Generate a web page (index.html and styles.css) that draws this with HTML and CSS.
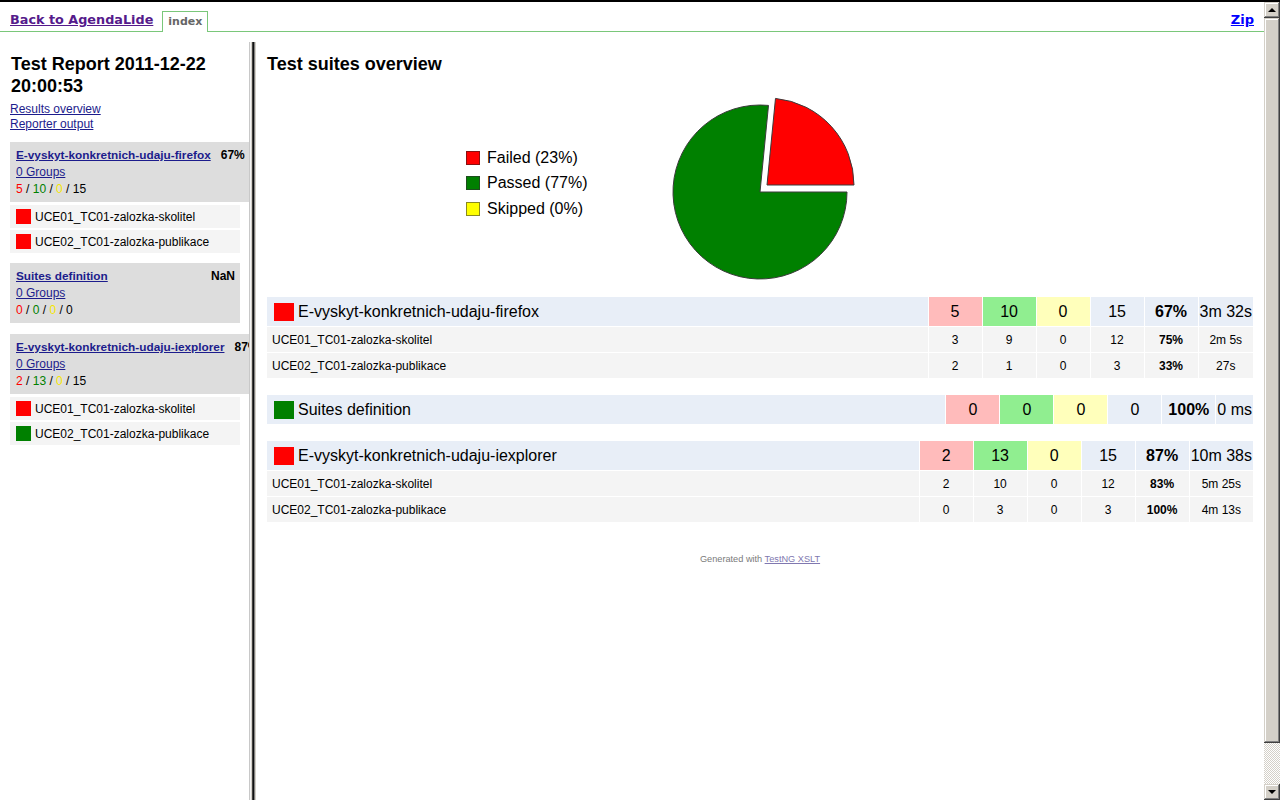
FILE: index.html
```html
<!DOCTYPE html>
<html lang="en">
<head>
<meta charset="utf-8">
<title>TestNG Report</title>
<link rel="stylesheet" href="styles.css">
</head>
<body>
<div class="topline"></div>
<div class="window">
  <div class="main">
    <header class="topframe">
      <nav class="topbar">
        <a class="back-link" href="#">Back to AgendaLide</a>
        <span class="tab">index</span>
        <a class="zip-link" href="#">Zip</a>
      </nav>
    </header>
    <div class="frames">
      <aside class="left-frame">
        <h1 class="report-title">Test Report 2011-12-22 20:00:53</h1>
        <div class="nav-links">
          <a href="#">Results overview</a>
          <a href="#">Reporter output</a>
        </div>

        <div class="suite">
          <div class="suite-box">
            <div class="suite-head"><a class="suite-link" href="#">E-vyskyt-konkretnich-udaju-firefox</a><span class="suite-pct">67%</span></div>
            <div class="suite-line"><a href="#">0 Groups</a></div>
            <div class="suite-line"><span class="c-fail">5</span> / <span class="c-pass">10</span> / <span class="c-skip">0</span> / 15</div>
          </div>
          <div class="test-row"><span class="sq sq-fail"></span>UCE01_TC01-zalozka-skolitel</div>
          <div class="test-row"><span class="sq sq-fail"></span>UCE02_TC01-zalozka-publikace</div>
        </div>

        <div class="suite suite-empty">
          <div class="suite-box">
            <div class="suite-head"><a class="suite-link" href="#">Suites definition</a><span class="suite-pct">NaN</span></div>
            <div class="suite-line"><a href="#">0 Groups</a></div>
            <div class="suite-line"><span class="c-fail">0</span> / <span class="c-pass">0</span> / <span class="c-skip">0</span> / 0</div>
          </div>
        </div>

        <div class="suite">
          <div class="suite-box">
            <div class="suite-head"><a class="suite-link" href="#">E-vyskyt-konkretnich-udaju-iexplorer</a><span class="suite-pct">87%</span></div>
            <div class="suite-line"><a href="#">0 Groups</a></div>
            <div class="suite-line"><span class="c-fail">2</span> / <span class="c-pass">13</span> / <span class="c-skip">0</span> / 15</div>
          </div>
          <div class="test-row"><span class="sq sq-fail"></span>UCE01_TC01-zalozka-skolitel</div>
          <div class="test-row"><span class="sq sq-pass"></span>UCE02_TC01-zalozka-publikace</div>
        </div>
      </aside>

      <div class="divider"></div>

      <main class="right-frame">
        <h2 class="overview-title">Test suites overview</h2>
        <div class="chart">
          <div class="legend">
            <div class="legend-row"><span class="lsq lsq-fail"></span>Failed (23%)</div>
            <div class="legend-row"><span class="lsq lsq-pass"></span>Passed (77%)</div>
            <div class="legend-row"><span class="lsq lsq-skip"></span>Skipped (0%)</div>
          </div>
          <svg class="pie" width="200" height="200" viewBox="0 0 200 200">
            <path d="M100,100 L187,100 A87,87 0 1 1 108.49,13.42 Z" fill="#008000" stroke="#3a3a3a" stroke-width="1"/>
            <path d="M107,93 L115.49,6.42 A87,87 0 0 1 194,93 Z" fill="#ff0000" stroke="#3a3a3a" stroke-width="1"/>
          </svg>
        </div>

        <table class="suite-table">
          <tr class="head">
            <td class="name"><div class="name-inner"><span class="big-sq sq-fail"></span>E-vyskyt-konkretnich-udaju-firefox</div></td>
            <td class="num fail">5</td><td class="num pass">10</td><td class="num skip">0</td><td class="num">15</td><td class="num pct">67%</td><td class="time">3m 32s</td>
          </tr>
          <tr class="sub">
            <td class="name">UCE01_TC01-zalozka-skolitel</td>
            <td class="num">3</td><td class="num">9</td><td class="num">0</td><td class="num">12</td><td class="num pct">75%</td><td class="time">2m 5s</td>
          </tr>
          <tr class="sub">
            <td class="name">UCE02_TC01-zalozka-publikace</td>
            <td class="num">2</td><td class="num">1</td><td class="num">0</td><td class="num">3</td><td class="num pct">33%</td><td class="time">27s</td>
          </tr>
        </table>

        <table class="suite-table">
          <tr class="head">
            <td class="name"><div class="name-inner"><span class="big-sq sq-pass"></span>Suites definition</div></td>
            <td class="num fail">0</td><td class="num pass">0</td><td class="num skip">0</td><td class="num">0</td><td class="num pct">100%</td><td class="time">0 ms</td>
          </tr>
        </table>

        <table class="suite-table">
          <tr class="head">
            <td class="name"><div class="name-inner"><span class="big-sq sq-fail"></span>E-vyskyt-konkretnich-udaju-iexplorer</div></td>
            <td class="num fail">2</td><td class="num pass">13</td><td class="num skip">0</td><td class="num">15</td><td class="num pct">87%</td><td class="time">10m 38s</td>
          </tr>
          <tr class="sub">
            <td class="name">UCE01_TC01-zalozka-skolitel</td>
            <td class="num">2</td><td class="num">10</td><td class="num">0</td><td class="num">12</td><td class="num pct">83%</td><td class="time">5m 25s</td>
          </tr>
          <tr class="sub">
            <td class="name">UCE02_TC01-zalozka-publikace</td>
            <td class="num">0</td><td class="num">3</td><td class="num">0</td><td class="num">3</td><td class="num pct">100%</td><td class="time">4m 13s</td>
          </tr>
        </table>

        <p class="footer">Generated with <a href="#">TestNG XSLT</a></p>
      </main>
    </div>
  </div>
  <div class="scrollbar">
    <div class="sb-btn"><span class="arrow-up"></span></div>
    <div class="sb-thumb"></div>
    <div class="sb-track"></div>
    <div class="sb-btn"><span class="arrow-down"></span></div>
  </div>
</div>
</body>
</html>
```

FILE: styles.css
```css
* { box-sizing: border-box; }

html, body {
  margin: 0;
  padding: 0;
  width: 1280px;
  height: 800px;
  overflow: hidden;
  background: #ffffff;
  font-family: "Liberation Sans", Arial, sans-serif;
  color: #000;
}

.topline {
  height: 2px;
  background: #000;
}

.window {
  display: flex;
  height: 798px;
}

.main {
  width: 1264px;
  display: flex;
  flex-direction: column;
}

/* ---------- top frame ---------- */
.topframe {
  height: 40px;
  flex: none;
}

.topbar {
  height: 30px;
  display: flex;
  align-items: flex-end;
  padding: 0 10px;
  border-bottom: 1px solid #7ac77a;
  font-family: "DejaVu Sans", Verdana, sans-serif;
  font-weight: bold;
}

.back-link {
  font-size: 12.8px;
  line-height: 20px;
  margin-bottom: 1px;
  color: #551a8b;
}

.tab {
  margin-left: 9px;
  margin-bottom: -1px;
  height: 21px;
  padding: 0 5px;
  border: 1px solid #7ac77a;
  border-bottom: none;
  background: #fff;
  color: #666;
  font-size: 11px;
  line-height: 19px;
}

.zip-link {
  margin-left: auto;
  font-size: 13px;
  line-height: 20px;
  margin-bottom: 1px;
  color: #0000ff;
}

/* ---------- frames ---------- */
.frames {
  flex: 1;
  display: flex;
  min-height: 0;
}

.left-frame {
  width: 249px;
  flex: none;
  overflow: hidden;
  padding-left: 10px;
}

.divider {
  width: 7px;
  flex: none;
  background: linear-gradient(to right,
    #c8c8c8 0 1px,
    #f4f4f4 1px 2px,
    #d4d0c8 2px 3px,
    #404040 3px 4px,
    #101010 4px 5px,
    #808080 5px 6px,
    #d4d0c8 6px 7px);
}

.right-frame {
  flex: 1;
  overflow: hidden;
  padding: 0 11px;
}

/* ---------- left frame ---------- */
.report-title {
  margin: 11px 0 0 1px;
  font-size: 18px;
  line-height: 22px;
  font-weight: bold;
  width: 230px;
}

.nav-links {
  margin-top: 5px;
  display: flex;
  flex-direction: column;
  align-items: flex-start;
  font-size: 12px;
  line-height: 15px;
}

.nav-links a,
.suite-line a,
.suite-link {
  color: #1c1c8c;
}

.suite {
  margin-top: 10px;
}

.suite-empty + .suite {
  margin-top: 11px;
}

.suite-box {
  width: max-content;
  min-width: 230px;
  background: #dddddd;
  padding: 4px 5px 4px 6px;
}

.suite-head {
  display: flex;
  justify-content: space-between;
  gap: 10px;
  font-size: 11.8px;
  font-weight: bold;
  line-height: 18px;
}

.suite-pct {
  font-size: 12px;
}

.suite-line {
  font-size: 12px;
  line-height: 17px;
}

.c-fail { color: #ff0000; }
.c-pass { color: #008000; }
.c-skip { color: #f5e600; }

.test-row {
  width: 230px;
  height: 23px;
  margin-top: 2px;
  display: flex;
  align-items: center;
  gap: 4px;
  padding-left: 6px;
  background: #f4f4f4;
  font-size: 12px;
}

.suite-box + .test-row {
  margin-top: 3px;
}

.sq {
  width: 15px;
  height: 15px;
  flex: none;
}

.sq-fail { background: #ff0000; }
.sq-pass { background: #008000; }

/* ---------- right frame ---------- */
.overview-title {
  margin: 11px 0 0;
  font-size: 18px;
  line-height: 22px;
  font-weight: bold;
}

.chart {
  height: 221px;
  padding-top: 17px;
  display: grid;
  grid-template-columns: 1fr 200px 1fr;
  align-items: start;
}

.legend {
  padding-left: 199px;
  margin-top: 53px;
  font-size: 16px;
}

.legend-row {
  height: 25.5px;
  display: flex;
  align-items: center;
  gap: 7px;
  white-space: nowrap;
}

.lsq {
  width: 14px;
  height: 14px;
  flex: none;
  border: 1px solid;
}

.lsq-fail { background: #ff0000; border-color: #8a1010; }
.lsq-pass { background: #008000; border-color: #1d4d1d; }
.lsq-skip { background: #ffff00; border-color: #8a8a20; }

.pie {
  display: block;
}

.suite-table {
  width: calc(100% + 2px);
  margin: 0 -1px 15px;
  border-collapse: separate;
  border-spacing: 1px;
}

.suite-table td {
  padding: 0;
  text-align: center;
}

.suite-table tr.head td {
  height: 29px;
  font-size: 16px;
  background: #e8eef7;
}

.suite-table tr.sub td {
  height: 25px;
  font-size: 12px;
  background: #f4f4f4;
}

.suite-table tr.sub td.name {
  padding-left: 5px;
}

.suite-table td.name {
  text-align: left;
}

.suite-table td.num {
  width: 53px;
}

.suite-table td.time {
  width: 1px;
  white-space: nowrap;
  padding: 0 1px;
}

.suite-table td.pct {
  font-weight: bold;
}

.suite-table tr.head td.fail { background: #ffbbbb; }
.suite-table tr.head td.pass { background: #90ee90; }
.suite-table tr.head td.skip { background: #ffffbb; }

.name-inner {
  display: flex;
  align-items: center;
  gap: 4px;
  padding-left: 7px;
}

.big-sq {
  width: 20px;
  height: 18px;
  flex: none;
}

.footer {
  margin: 0;
  padding-top: 15px;
  text-align: center;
  font-size: 9.2px;
  line-height: 12px;
  color: #7a7a7a;
}

.footer a {
  color: #8078b0;
}

/* ---------- scrollbar ---------- */
.scrollbar {
  width: 16px;
  flex: none;
  display: flex;
  flex-direction: column;
}

.sb-btn,
.sb-thumb {
  background: #d4d0c8;
  box-shadow:
    inset -1px -1px #404040,
    inset 1px 1px #d4d0c8,
    inset -2px -2px #808080,
    inset 2px 2px #ffffff;
}

.sb-btn {
  height: 16px;
  flex: none;
  display: flex;
  align-items: center;
  justify-content: center;
}

.sb-thumb {
  height: 725px;
  flex: none;
}

.sb-track {
  flex: 1;
  background: repeating-conic-gradient(#d4d0c8 0 25%, #ffffff 0 50%) 0 0 / 2px 2px;
}

.arrow-up {
  width: 0;
  height: 0;
  border-left: 4px solid transparent;
  border-right: 4px solid transparent;
  border-bottom: 4px solid #000;
  margin-top: -1px;
}

.arrow-down {
  width: 0;
  height: 0;
  border-left: 4px solid transparent;
  border-right: 4px solid transparent;
  border-top: 4px solid #000;
}
```
